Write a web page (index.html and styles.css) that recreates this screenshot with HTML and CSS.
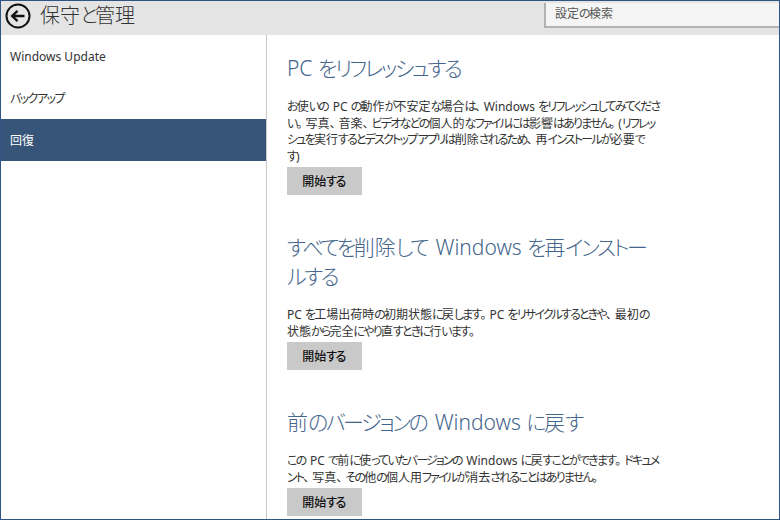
FILE: index.html
```html
<!DOCTYPE html>
<html lang="ja">
<head>
<meta charset="utf-8">
<title>保守と管理</title>
<link rel="stylesheet" href="styles.css">
</head>
<body>
<div class="window">
  <header class="topbar">
    <div class="heading">
      <svg class="back" width="26" height="26" viewBox="0 0 26 26" aria-hidden="true">
        <circle cx="13" cy="13" r="11.5" fill="none" stroke="#111" stroke-width="2"/>
        <path d="M19.5 13H7.5M12.5 7.8 7.2 13l5.3 5.2" fill="none" stroke="#111" stroke-width="2.4"/>
      </svg>
      <span class="page-title">保守<span class="k">と</span>管理</span>
    </div>
    <div class="search">設定<span class="k">の</span>検索</div>
  </header>
  <div class="body">
    <nav class="sidebar">
      <a class="nav-item">Windows Update</a>
      <a class="nav-item"><span class="k">バックアップ</span></a>
      <a class="nav-item active">回復</a>
    </nav>
    <main class="content">
      <section class="sec">
        <h2>PC <span class="k">をリフレッシュする</span></h2>
        <p><span class="k">お</span>使<span class="k ke">いの</span> PC <span class="k">の</span>動作<span class="k">が</span>不安定<span class="k">な</span>場合<span class="k">は</span><span class="p">、</span>Windows <span class="k">をリフレッシュしてみてくださ</span><br><span class="k">い</span><span class="p">。</span>写真<span class="p">、</span>音楽<span class="p">、</span><span class="k">ビデオなどの</span>個人的<span class="k">なファイルには</span>影響<span class="k">はありません</span><span class="p">。</span>(<span class="k">リフレッ</span><br><span class="k">シュを</span>実行<span class="k">するとデスクトップ アプリは</span>削除<span class="k">されるため</span><span class="p">、</span>再<span class="k">インストールが</span>必要<span class="k">で</span><br><span class="k">す</span>)</p>
        <button class="start">開始<span class="k">する</span></button>
      </section>
      <section class="sec">
        <h2><span class="k">すべてを</span>削除<span class="k ke">して</span> Windows <span class="k">を</span>再<span class="k">インストー</span><br><span class="k">ルする</span></h2>
        <p>PC <span class="k">を</span>工場出荷時<span class="k">の</span>初期状態<span class="k">に</span>戻<span class="k">します</span><span class="p">。</span>PC <span class="k">をリサイクルするときや</span><span class="p">、</span>最初<span class="k">の</span><br>状態<span class="k">から</span>完全<span class="k">にやり</span>直<span class="k">すときに</span>行<span class="k">います</span><span class="p">。</span></p>
        <button class="start">開始<span class="k">する</span></button>
      </section>
      <section class="sec">
        <h2>前<span class="k ke">のバージョンの</span> Windows <span class="k">に</span>戻<span class="k">す</span></h2>
        <p><span class="k ke">この</span> PC <span class="k">で</span>前<span class="k">に</span>使<span class="k ke">っていたバージョンの</span> Windows <span class="k">に</span>戻<span class="k">すことができます</span><span class="p">。</span><span class="k">ドキュメ</span><br><span class="k">ント</span><span class="p">、</span>写真<span class="p">、</span><span class="k">その</span>他<span class="k">の</span>個人用<span class="k">ファイルが</span>消去<span class="k">されることはありません</span><span class="p">。</span></p>
        <button class="start">開始<span class="k">する</span></button>
      </section>
    </main>
  </div>
</div>
</body>
</html>
```
FILE: styles.css
```css
* { box-sizing: border-box; }
html, body { margin: 0; height: 100%; }
body {
  font-family: "Noto Sans", "Noto Sans CJK JP", sans-serif;
  font-feature-settings: "palt";
  color: #333;
  background: #fff;
  overflow: hidden;
}
.k { letter-spacing: -0.13em; }
.ke { margin-right: 0.13em; }
.p { font-feature-settings: normal; letter-spacing: -0.25em; }
.window {
  width: 780px;
  height: 520px;
  border: 1px solid #2f5483;
  display: flex;
  flex-direction: column;
  overflow: hidden;
}
.topbar {
  height: 34px;
  flex: none;
  background: #e4e4e4;
  display: flex;
  justify-content: space-between;
  align-items: flex-start;
}
.heading {
  display: flex;
  align-items: center;
  height: 28px;
  padding: 2px 0 0 4px;
}
.back { display: block; }
.page-title {
  margin-left: 9px;
  font-size: 20px;
  font-weight: 300;
  color: #333;
  line-height: 26px;
}
.search {
  width: 235px;
  height: 25px;
  margin-top: 2px;
  padding-left: 9px;
  background: #f5f5f5;
  border-left: 2px solid #b2b2b2;
  border-bottom: 2px solid #b2b2b2;
  font-size: 12px;
  line-height: 21px;
  color: #555;
}
.body { flex: 1; display: flex; min-height: 0; }
.sidebar {
  width: 266px;
  flex: none;
  border-right: 1px solid #c8c8c8;
  font-size: 12px;
}
.nav-item {
  display: block;
  height: 42px;
  line-height: 44px;
  padding-left: 9px;
  color: #333;
}
.active { background: #365579; color: #fff; }
.content { flex: 1; padding-left: 20px; overflow: hidden; }
.sec { padding-top: 38px; }
.sec:first-child { padding-top: 19px; }
.sec h2 {
  margin: 0;
  font-size: 21px;
  font-weight: 300;
  line-height: 29px;
  color: #44658c;
  white-space: nowrap;
}
.sec h2 .k { letter-spacing: -0.115em; }
.sec p {
  margin: 16px 0 0;
  font-size: 12px;
  line-height: 16.5px;
  color: #333;
  white-space: nowrap;
}
.sec p .k { letter-spacing: -0.15em; }
.start {
  display: block;
  width: 75px;
  height: 28px;
  margin-top: 2px;
  border: 0;
  padding: 0 2px 0 0;
  background: #c9c9c9;
  color: #111;
  font-family: inherit;
  font-feature-settings: inherit;
  font-size: 12px;
  font-weight: 500;
}
```
